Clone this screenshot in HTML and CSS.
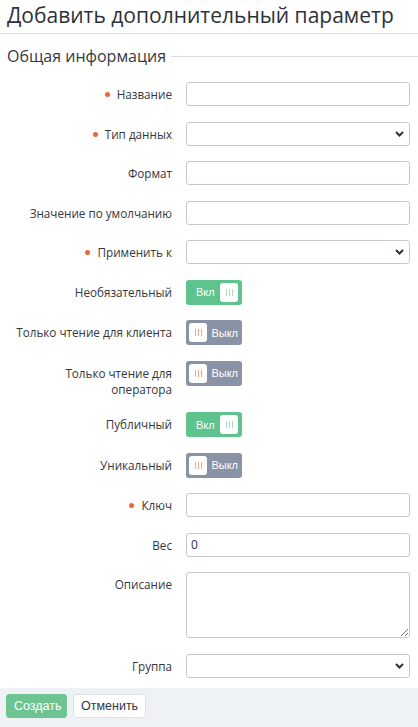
FILE: index.html
```html
<!DOCTYPE html>
<html lang="ru">
<head>
<meta charset="utf-8">
<title>Добавить дополнительный параметр</title>
<link rel="stylesheet" href="styles.css">
</head>
<body>
<div class="page">
  <h1 class="title">Добавить дополнительный параметр</h1>
  <div class="section-head"><span>Общая информация</span><i class="rule"></i></div>
  <form class="form">
    <div class="row"><label class="lbl req">Название</label><div class="ctl"><input class="inp" type="text"></div></div>
    <div class="row"><label class="lbl req">Тип данных</label><div class="ctl sel"><select class="inp"><option></option></select><svg class="chev" width="9" height="6" viewBox="0 0 9 6"><path d="M1 1 L4.5 4.5 L8 1" fill="none" stroke="#2b3240" stroke-width="2"/></svg></div></div>
    <div class="row"><label class="lbl">Формат</label><div class="ctl"><input class="inp" type="text"></div></div>
    <div class="row"><label class="lbl">Значение по умолчанию</label><div class="ctl"><input class="inp" type="text"></div></div>
    <div class="row"><label class="lbl req">Применить к</label><div class="ctl sel"><select class="inp"><option></option></select><svg class="chev" width="9" height="6" viewBox="0 0 9 6"><path d="M1 1 L4.5 4.5 L8 1" fill="none" stroke="#2b3240" stroke-width="2"/></svg></div></div>
    <div class="row"><label class="lbl">Необязательный</label><div class="ctl"><span class="tog on"><span class="tt">Вкл</span><span class="knob"><b></b><b></b><b></b></span></span></div></div>
    <div class="row"><label class="lbl">Только чтение для клиента</label><div class="ctl"><span class="tog off"><span class="knob"><b></b><b></b><b></b></span><span class="tt">Выкл</span></span></div></div>
    <div class="row"><label class="lbl">Только чтение для оператора</label><div class="ctl"><span class="tog off"><span class="knob"><b></b><b></b><b></b></span><span class="tt">Выкл</span></span></div></div>
    <div class="row"><label class="lbl">Публичный</label><div class="ctl"><span class="tog on"><span class="tt">Вкл</span><span class="knob"><b></b><b></b><b></b></span></span></div></div>
    <div class="row"><label class="lbl">Уникальный</label><div class="ctl"><span class="tog off"><span class="knob"><b></b><b></b><b></b></span><span class="tt">Выкл</span></span></div></div>
    <div class="row"><label class="lbl req">Ключ</label><div class="ctl"><input class="inp" type="text"></div></div>
    <div class="row"><label class="lbl">Вес</label><div class="ctl"><input class="inp" type="text" value="0"></div></div>
    <div class="row"><label class="lbl">Описание</label><div class="ctl"><textarea class="inp area"></textarea></div></div>
    <div class="row last"><label class="lbl">Группа</label><div class="ctl sel"><select class="inp"><option></option></select><svg class="chev" width="9" height="6" viewBox="0 0 9 6"><path d="M1 1 L4.5 4.5 L8 1" fill="none" stroke="#2b3240" stroke-width="2"/></svg></div></div>
  </form>
  <div class="footer">
    <button class="btn primary" type="button">Создать</button>
    <button class="btn" type="button">Отменить</button>
  </div>
</div>
</body>
</html>
```

FILE: styles.css
```css
html, body {
  margin: 0;
  padding: 0;
  background: #ffffff;
}
body {
  font-family: "Open Sans", "Noto Sans", sans-serif;
  color: #333840;
  width: 418px;
  height: 727px;
  overflow: hidden;
}
.page {
  display: flex;
  flex-direction: column;
  height: 727px;
}
.title {
  margin: 0;
  padding: 2px 7px 4px;
  font-size: 21px;
  font-weight: 400;
  line-height: 27px;
  white-space: nowrap;
  color: #2d3138;
  border-bottom: 1px solid #dcdde0;
}
.section-head {
  display: flex;
  align-items: center;
  gap: 5px;
  padding: 11px 0 0 7px;
  font-size: 16px;
  line-height: 22px;
  color: #363a42;
}
.section-head .rule {
  flex: 1;
  height: 1px;
  background: #d8dade;
  margin-top: 1px;
}
.form {
  display: flex;
  flex-direction: column;
  padding: 15px 8px 0 7px;
}
.row {
  display: flex;
  align-items: flex-start;
  gap: 14px;
  margin-bottom: 15.5px;
}
.row.last {
  margin-bottom: 0;
}
.lbl {
  width: 165px;
  flex: none;
  text-align: right;
  font-size: 11.7px;
  line-height: 16px;
  padding-top: 4px;
  color: #333840;
}
.lbl.req::before {
  content: "";
  display: inline-block;
  width: 5px;
  height: 5px;
  border-radius: 50%;
  background: #f0663a;
  margin-right: 7px;
  vertical-align: 2px;
}
.ctl {
  flex: 1;
  display: flex;
  position: relative;
}
.inp {
  box-sizing: border-box;
  width: 100%;
  height: 24px;
  border: 1px solid #c6c9d0;
  border-radius: 3px;
  background: #fff;
  font-family: "Open Sans", sans-serif;
  font-size: 12px;
  color: #2d3138;
  padding: 0 4px;
  margin: 0;
  outline: none;
}
select.inp {
  appearance: none;
  -webkit-appearance: none;
}
.area {
  display: block;
  height: 66px;
  resize: vertical;
  padding: 4px;
}
.chev {
  position: absolute;
  right: 6px;
  top: 9px;
  pointer-events: none;
}
.tog {
  box-sizing: border-box;
  width: 56px;
  height: 25px;
  border-radius: 3px;
  display: flex;
  align-items: center;
  justify-content: space-between;
  padding: 0 3px;
  font-family: "Liberation Sans", Arial, sans-serif;
  font-size: 11px;
  color: #ffffff;
}
.tog.on {
  background: #5ec38c;
  padding-left: 10px;
  padding-right: 4px;
}
.tog.off {
  background: #8a92a5;
  padding-right: 4px;
}
.knob {
  width: 18px;
  height: 19px;
  background: #ffffff;
  border-radius: 3px;
  display: flex;
  align-items: center;
  justify-content: center;
  gap: 2px;
}
.knob b {
  display: block;
  width: 1px;
  height: 7px;
}
.tog.on .knob b { background: #a9dcc1; }
.tog.off .knob b { background: #f2a77e; }
.footer {
  margin-top: auto;
  background: #eff2f5;
  display: flex;
  gap: 6px;
  padding: 6px 6px 9px;
}
.btn {
  box-sizing: border-box;
  height: 24px;
  border-radius: 3px;
  border: 1px solid #dfe1e5;
  background: #ffffff;
  font-family: "Liberation Sans", Arial, sans-serif;
  font-size: 12.5px;
  color: #343840;
  padding: 0 7px;
  margin: 0;
  width: 73px;
}
.btn.primary {
  background: #6cc492;
  border-color: #6cc492;
  color: #ffffff;
  width: 61px;
}
```
